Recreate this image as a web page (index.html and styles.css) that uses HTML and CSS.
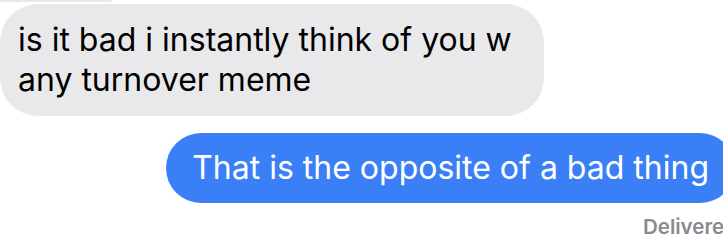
FILE: index.html
```html
<!DOCTYPE html>
<html>
<head>
<meta charset="utf-8">
<link rel="stylesheet" href="styles.css">
</head>
<body>
<div class="thread">
  <div class="prev"></div>
  <div class="msg in">is it bad i instantly think of you w<br>any turnover meme</div>
  <div class="row-out">
    <div class="msg out">That is the opposite of a bad thing</div>
  </div>
  <div class="status">Delivered</div>
</div>
</body>
</html>
```

FILE: styles.css
```css
html, body {
  margin: 0;
  padding: 0;
  background: #ffffff;
  overflow: hidden;
}
.thread {
  width: 723px;
  height: 240px;
  overflow: hidden;
  font-family: "Inter", "Roboto", sans-serif;
  display: flex;
  flex-direction: column;
  align-items: flex-start;
}
.prev {
  width: 112px;
  height: 2px;
  background: #e9e9eb;
  border-bottom-right-radius: 2px;
}
.msg {
  font-size: 32px;
  line-height: 40px;
  letter-spacing: 0;
}
.in {
  margin-top: 2px;
  background: #e9e9eb;
  color: #000;
  width: 544px;
  box-sizing: border-box;
  padding: 16px 20px 16px 18px;
  border-radius: 38px;
}
.row-out {
  align-self: stretch;
  display: flex;
  justify-content: flex-end;
  margin-top: 17px;
  margin-right: -12px;
}
.out {
  background: #3b7ff6;
  color: #fff;
  padding: 15px 26px 15px 26px;
  border-radius: 36px;
  white-space: nowrap;
}
.status {
  align-self: flex-end;
  margin-top: 11px;
  margin-right: -14px;
  font-size: 20.5px;
  font-weight: 600;
  color: #8a8a8e;
  white-space: nowrap;
}
```
